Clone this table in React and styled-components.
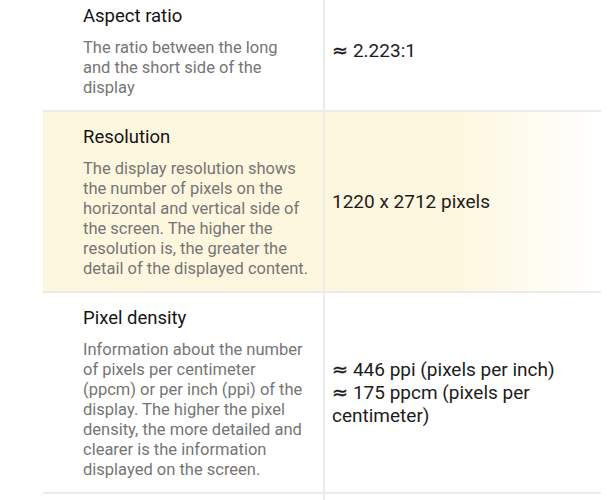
import React from 'react';
import styled, { createGlobalStyle } from 'styled-components';

const GlobalStyle = createGlobalStyle`
  html, body {
    margin: 0;
    padding: 0;
    background: #ffffff;
    overflow: hidden;
  }
  body {
    font-family: 'Roboto', 'Liberation Sans', sans-serif;
  }
`

const SpecTable = styled.div`
  display: flex;
  flex-direction: column;
  width: 558px;
  margin: -9px 0 0 43px;
`

const SpecRow = styled.div`
  display: grid;
  grid-template-columns: 282px 1fr;
  border-bottom: 2px solid #ebebeb;
  background: ${props => props.highlight
    ? 'linear-gradient(to right, #fef7df 0%, #fef7df 74%, #ffffff 100%)'
    : '#ffffff'};
`

const LabelCell = styled.div`
  padding: 13px 12px 12px 40px;
  border-right: 2px solid #ebebeb;
`

const SpecTitle = styled.div`
  font-size: 18.5px;
  line-height: 24px;
  color: #141414;
  margin-bottom: 10px;
`

const SpecDescription = styled.div`
  max-width: ${props => props.maxWidth || 'none'};
  font-size: 16.5px;
  line-height: 20px;
  color: #757575;
`

const ValueCell = styled.div`
  display: flex;
  align-items: center;
  padding: 0 30px 0 7px;
  font-size: 19px;
  line-height: 23px;
  color: #1c1c1c;
`

const ValueLines = styled.div`
  display: flex;
  flex-direction: column;
`

const Approx = styled.span`
  font-family: 'DejaVu Sans', sans-serif;
  font-size: 19px;
  line-height: 16px;
  margin-right: 5px;
  -webkit-text-stroke: 0.4px #1c1c1c;
`

const Filler = styled.div`
  display: grid;
  grid-template-columns: 282px 1fr;
  height: 30px;
`

const specs = [
  {
    title: 'Aspect ratio',
    description: 'The ratio between the long and the short side of the display',
    descWidth: '205px',
    values: [{ approx: true, text: '2.223:1' }],
  },
  {
    title: 'Resolution',
    description: 'The display resolution shows the number of pixels on the horizontal and vertical side of the screen. The higher the resolution is, the greater the detail of the displayed content.',
    values: [{ text: '1220 x 2712 pixels' }],
    highlight: true,
  },
  {
    title: 'Pixel density',
    description: 'Information about the number of pixels per centimeter (ppcm) or per inch (ppi) of the display. The higher the pixel density, the more detailed and clearer is the information displayed on the screen.',
    values: [
      { approx: true, text: '446 ppi (pixels per inch)' },
      { approx: true, text: '175 ppcm (pixels per centimeter)' },
    ],
  },
]

const App = () => {
  return (
    <>
      <GlobalStyle />
      <SpecTable>
        {specs.map((spec, idx) => (
          <SpecRow key={idx} highlight={spec.highlight}>
            <LabelCell>
              <SpecTitle>{spec.title}</SpecTitle>
              <SpecDescription maxWidth={spec.descWidth}>{spec.description}</SpecDescription>
            </LabelCell>
            <ValueCell>
              <ValueLines>
                {spec.values.map((v, i) => (
                  <span key={i}>
                    {v.approx && <Approx>≈</Approx>}
                    {v.text}
                  </span>
                ))}
              </ValueLines>
            </ValueCell>
          </SpecRow>
        ))}
        <Filler>
          <LabelCell />
          <div />
        </Filler>
      </SpecTable>
    </>
  )
}

export default App;
